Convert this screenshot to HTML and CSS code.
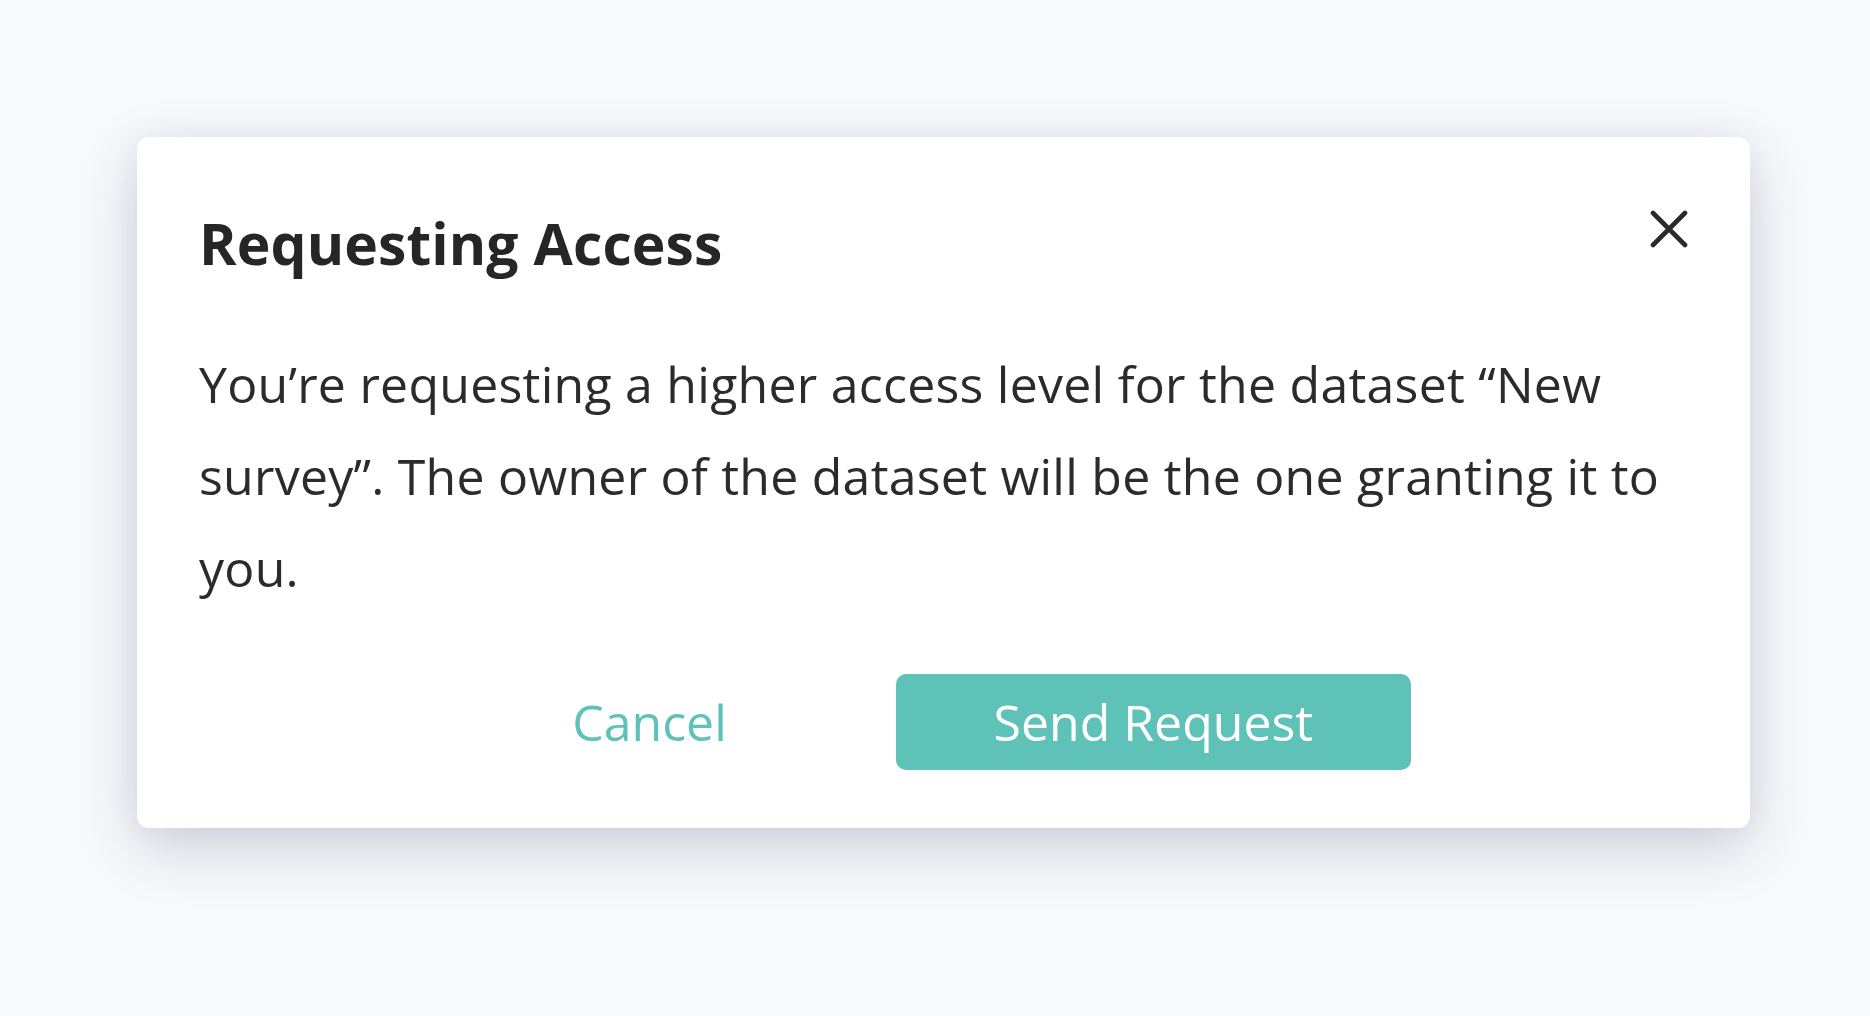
FILE: index.html
```html
<!DOCTYPE html>
<html lang="en">
<head>
<meta charset="utf-8">
<title>Requesting Access</title>
<link rel="stylesheet" href="styles.css">
</head>
<body>
<div class="page">
  <div class="modal" role="dialog" aria-labelledby="modal-title">
    <div class="modal-header">
      <h2 class="modal-title" id="modal-title">Requesting Access</h2>
      <button class="close-btn" type="button" aria-label="Close">
        <svg width="38" height="38" viewBox="0 0 38 38" aria-hidden="true">
          <path d="M3 3 L35 35 M35 3 L3 35" stroke="#2a2a2a" stroke-width="4.6" stroke-linecap="round" fill="none"/>
        </svg>
      </button>
    </div>
    <p class="modal-body">You’re requesting a higher access level for the dataset “New<br>survey”. The owner of the dataset will be the one granting it to<br>you.</p>
    <div class="modal-footer">
      <button class="btn-cancel" type="button">Cancel</button>
      <button class="btn-primary" type="button">Send Request</button>
    </div>
  </div>
</div>
</body>
</html>
```

FILE: styles.css
```css
html, body {
  margin: 0;
  padding: 0;
}
body {
  background: #f8f9fb;
  font-family: "Open Sans", Lato, "Liberation Sans", sans-serif;
  color: #2b2b2b;
  width: 1870px;
  height: 1016px;
  overflow: hidden;
}
.page {
  padding: 137px 120px 0 137px;
}
.modal {
  width: 1613px;
  box-sizing: border-box;
  background: #ffffff;
  border-radius: 12px;
  padding: 72px 62px 58px 62px;
  box-shadow: 0 20px 60px rgba(40, 50, 90, 0.2), 0 0 30px rgba(40, 50, 90, 0.05);
}
.modal-header {
  display: flex;
  justify-content: space-between;
  align-items: flex-start;
}
.modal-title {
  margin: 0;
  font-size: 57px;
  line-height: 68px;
  font-weight: 700;
  color: #262626;
  letter-spacing: 0.1px;
}
.close-btn {
  border: 0;
  background: none;
  padding: 0;
  margin-top: 1px;
  width: 38px;
  height: 38px;
  cursor: pointer;
  display: block;
}
.close-btn svg {
  display: block;
}
.modal-body {
  margin: 61px 0 0 0;
  font-size: 50px;
  line-height: 92px;
  letter-spacing: 0.25px;
  color: #2b2b2b;
}
.modal-footer {
  margin-top: 60px;
  display: flex;
  justify-content: center;
  align-items: center;
  gap: 75px;
}
.btn-cancel {
  border: 0;
  background: none;
  font-family: inherit;
  font-size: 50px;
  color: #5fc2b9;
  padding: 0 94px 0 96px;
  height: 96px;
  cursor: pointer;
}
.btn-primary {
  border: 0;
  background: #5fc2b9;
  color: #ffffff;
  font-family: inherit;
  font-size: 50px;
  width: 515px;
  height: 96px;
  border-radius: 10px;
  cursor: pointer;
}
```
